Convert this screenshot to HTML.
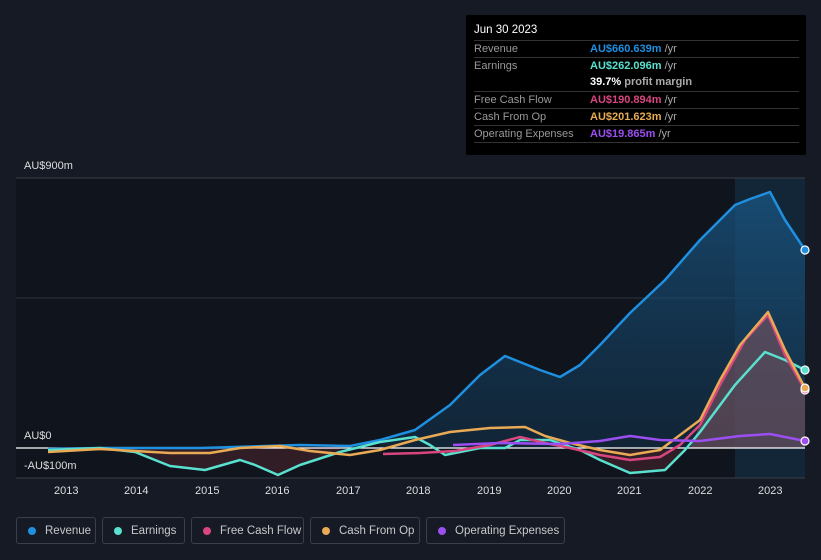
<!DOCTYPE html><html><head><meta charset="utf-8"><style>
body{margin:0;width:821px;height:560px;background:#151a25;font-family:"Liberation Sans",sans-serif;overflow:hidden;position:relative}
.tt{position:absolute;left:466px;top:15px;width:340px;height:140px;background:#000;border-radius:2px;font-size:11px;color:#999}
.tt .h{position:absolute;left:8px;top:9px;color:#fff;font-size:11.5px}
.row{position:absolute;left:8px;width:325px;border-top:1px solid #333;height:17px;line-height:17px}
.row b{position:absolute;left:116px;font-weight:bold}
.row span.u{color:#aaa}
.lg{position:absolute;top:517px;height:27px;border:1px solid #3a3f4a;border-radius:3px;font-size:11.5px;color:#c8c8c8;line-height:27px;box-sizing:border-box;padding-left:28px}
.lg i{position:absolute;left:11px;top:9px;width:8px;height:8px;border-radius:50%}
.ax{position:absolute;font-size:11px;color:#ddd}
</style></head><body>
<svg width="821" height="560" style="position:absolute;left:0;top:0">
<defs><linearGradient id="g" x1="0" y1="0" x2="0" y2="1"><stop offset="0" stop-color="#1a5a8a" stop-opacity=".7"/><stop offset="1" stop-color="#123550" stop-opacity=".5"/></linearGradient></defs>
<rect x="16" y="178" width="789" height="300" fill="#10141c"/>
<rect x="735" y="178" width="70" height="300" fill="#16324a" opacity=".6"/>
<line x1="16" y1="178" x2="805" y2="178" stroke="#3a3f48"/>
<line x1="16" y1="298" x2="805" y2="298" stroke="#2c3340"/>
<line x1="16" y1="478" x2="805" y2="478" stroke="#3a3f48"/>
<path d="M380,440 L415,430 L450,405 L480,375 L505,356 L520,362 L540,370 L560,377 L580,365 L600,345 L630,313 L665,280 L700,240 L735,205 L750,199 L770,192 L785,220 L805,250 L805,448 L380,448Z" fill="url(#g)"/>
<path d="M700,425 L720,385 L745,340 L768,312 L785,350 L805,388 L805,448 L690,448Z" fill="#7a5560" opacity=".6"/>
<path d="M135,452 L170,466 L205,470 L240,460 L278,475 L300,465 L340,452 L340,448 L135,448Z M580,450 L600,460 L630,473 L665,470 L685,450Z" fill="#3a1f28" opacity=".8"/>
<line x1="16" y1="448" x2="805" y2="448" stroke="#fff" stroke-width="1.2"/>
<g fill="none" stroke-width="2.5" stroke-linejoin="round">
<polyline stroke="#1f8fe0" points="48,449 100,448 200,448 300,445 350,446 380,440 415,430 450,405 480,375 505,356 520,362 540,370 560,377 580,365 600,345 630,313 665,280 700,240 735,205 750,199 770,192 785,220 805,250"/>
<polyline stroke="#59e0cf" points="48,450 100,448 135,452 170,466 205,470 240,460 255,465 278,475 300,465 340,452 380,442 415,437 430,445 445,455 480,448 505,448 520,440 550,440 580,450 600,460 630,473 665,470 685,450 700,432 735,385 765,352 785,360 805,370"/>
<polyline stroke="#d9467f" points="383,454 420,453 455,451 490,445 520,437 545,443 570,448 600,455 630,460 660,457 680,445 700,425 720,385 745,340 768,315 785,355 805,390"/>
<polyline stroke="#e8aa55" points="48,452 100,449 135,451 170,453 210,453 240,448 280,446 310,451 350,455 380,450 415,440 450,432 490,428 525,427 545,436 570,443 600,450 630,455 660,450 680,435 700,420 720,380 740,345 768,312 785,350 805,388"/>
<polyline stroke="#9b4ff0" points="453,445 500,443 560,444 600,441 630,436 660,440 700,441 740,436 770,434 805,441"/>
</g>
<g stroke="#fff" stroke-width="1.2"><circle cx="805" cy="250" r="4" fill="#1f8fe0"/><circle cx="805" cy="370" r="4" fill="#59e0cf"/><circle cx="805" cy="390" r="4" fill="#d9467f"/><circle cx="805" cy="388" r="4" fill="#e8aa55"/><circle cx="805" cy="441" r="4" fill="#9b4ff0"/></g>
</svg>
<div class="ax" style="left:24px;top:160px">AU$900m</div>
<div class="ax" style="left:24px;top:430px">AU$0</div>
<div class="ax" style="left:24px;top:460px">-AU$100m</div>
<div class="ax" style="top:485px;left:54px">2013</div><div class="ax" style="top:485px;left:124px">2014</div><div class="ax" style="top:485px;left:195px">2015</div><div class="ax" style="top:485px;left:265px">2016</div><div class="ax" style="top:485px;left:336px">2017</div><div class="ax" style="top:485px;left:406px">2018</div><div class="ax" style="top:485px;left:477px">2019</div><div class="ax" style="top:485px;left:547px">2020</div><div class="ax" style="top:485px;left:617px">2021</div><div class="ax" style="top:485px;left:688px">2022</div><div class="ax" style="top:485px;left:758px">2023</div>
<div class="tt"><div class="h">Jun 30 2023</div>
<div class="row" style="top:25px">Revenue<b style="color:#1f8fe0">AU$660.639m <span class="u" style="font-weight:normal">/yr</span></b></div>
<div class="row" style="top:42px">Earnings<b style="color:#59e0cf">AU$262.096m <span class="u" style="font-weight:normal">/yr</span></b></div>
<div class="row" style="top:59px;border:0"><b style="color:#fff">39.7% <span class="u">profit margin</span></b></div>
<div class="row" style="top:76px">Free Cash Flow<b style="color:#d9467f">AU$190.894m <span class="u" style="font-weight:normal">/yr</span></b></div>
<div class="row" style="top:93px">Cash From Op<b style="color:#e8aa55">AU$201.623m <span class="u" style="font-weight:normal">/yr</span></b></div>
<div class="row" style="top:110px">Operating Expenses<b style="color:#9b4ff0">AU$19.865m <span class="u" style="font-weight:normal">/yr</span></b></div>
<div class="row" style="top:127px"></div>
</div>
<div class="lg" style="left:16px;width:80px"><i style="background:#1f8fe0"></i>Revenue</div>
<div class="lg" style="left:102px;width:83px"><i style="background:#59e0cf"></i>Earnings</div>
<div class="lg" style="left:191px;width:113px"><i style="background:#d9467f"></i>Free Cash Flow</div>
<div class="lg" style="left:310px;width:110px"><i style="background:#e8aa55"></i>Cash From Op</div>
<div class="lg" style="left:426px;width:139px"><i style="background:#9b4ff0"></i>Operating Expenses</div>
</body></html>
